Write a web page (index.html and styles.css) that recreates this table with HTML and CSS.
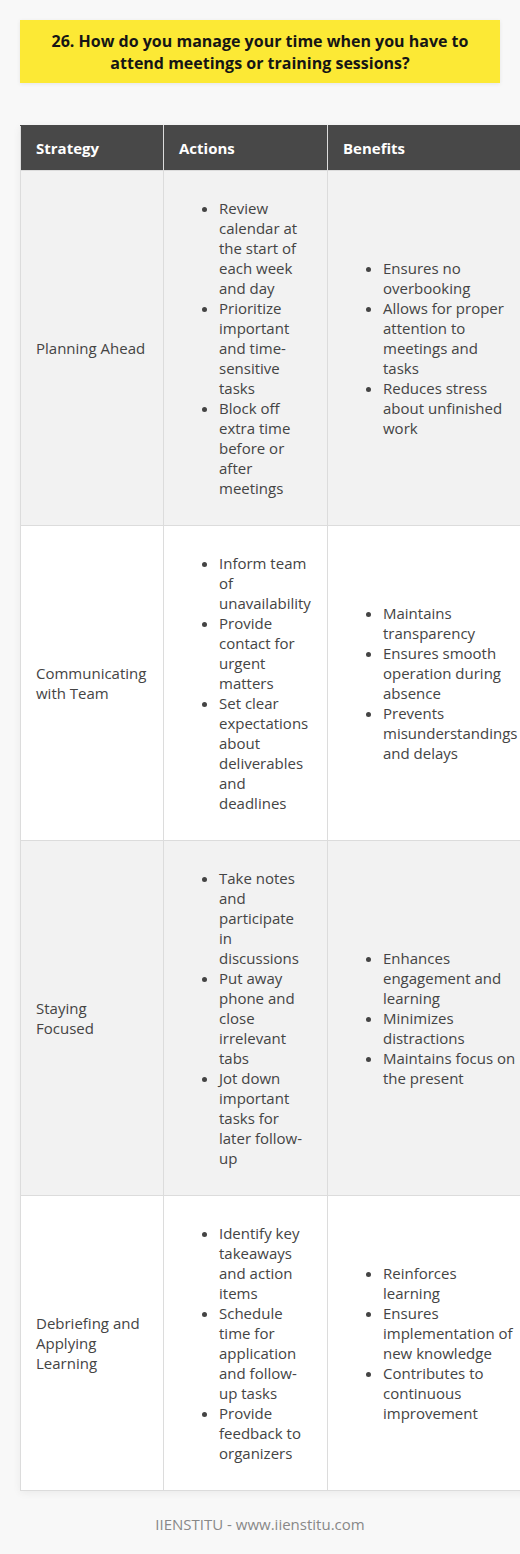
FILE: index.html
```html
<!DOCTYPE html>
<html>
<head>
<meta charset="utf-8">
<link rel="stylesheet" href="styles.css">
</head>
<body>
<div class="page">
  <h1 class="title">26. How do you manage your time when you have to attend meetings or training sessions?</h1>
  <table class="grid">
    <colgroup><col class="c1"><col class="c2"><col class="c3"></colgroup>
    <thead>
      <tr><th>Strategy</th><th>Actions</th><th>Benefits</th></tr>
    </thead>
    <tbody>
      <tr class="alt">
        <td>Planning Ahead</td>
        <td class="act"><ul><li>Review calendar at the start of each week and day</li><li>Prioritize important and time-sensitive tasks</li><li>Block off extra time before or after meetings</li></ul></td>
        <td><ul><li>Ensures no overbooking</li><li>Allows for proper attention to meetings and tasks</li><li>Reduces stress about unfinished work</li></ul></td>
      </tr>
      <tr>
        <td>Communicating with Team</td>
        <td class="act"><ul><li>Inform team of unavailability</li><li>Provide contact for urgent matters</li><li>Set clear expectations about deliverables and deadlines</li></ul></td>
        <td><ul><li>Maintains transparency</li><li>Ensures smooth operation during absence</li><li>Prevents misunderstandings and delays</li></ul></td>
      </tr>
      <tr class="alt">
        <td>Staying Focused</td>
        <td class="act"><ul><li>Take notes and participate in discussions</li><li>Put away phone and close irrelevant tabs</li><li>Jot down important tasks for later follow-up</li></ul></td>
        <td><ul><li>Enhances engagement and learning</li><li>Minimizes distractions</li><li>Maintains focus on the present</li></ul></td>
      </tr>
      <tr>
        <td>Debriefing and Applying Learning</td>
        <td class="act"><ul><li>Identify key takeaways and action items</li><li>Schedule time for application and follow-up tasks</li><li>Provide feedback to organizers</li></ul></td>
        <td><ul><li>Reinforces learning</li><li>Ensures implementation of new knowledge</li><li>Contributes to continuous improvement</li></ul></td>
      </tr>
    </tbody>
  </table>
  <p class="footer">IIENSTITU - www.iienstitu.com</p>
</div>
</body>
</html>
```

FILE: styles.css
```css
html, body {
  margin: 0;
  padding: 0;
  overflow-x: hidden;
  background: #f8f8f8;
}
body {
  font-family: "Open Sans", "Liberation Sans", sans-serif;
  color: #444;
}
.page {
  width: 520px;
  padding: 20px 0 0;
}
.title {
  margin: 0 20px;
  background: #fce935;
  color: #151515;
  font-size: 16px;
  font-weight: 700;
  line-height: 22px;
  text-align: center;
  padding: 10px 20px 9px;
  box-shadow: 0 1px 4px rgba(0,0,0,0.08);
}
.grid {
  margin: 42px 0 0 20px;
  border-collapse: collapse;
  table-layout: fixed;
  width: 511px;
  font-size: 15px;
  line-height: 20px;
  box-shadow: 0 2px 8px rgba(0,0,0,0.06);
}
.c1 { width: 143px; }
.c2 { width: 164px; }
.c3 { width: 204px; }
.grid th {
  background: #484848;
  color: #fff;
  font-weight: 700;
  text-align: left;
  padding: 12px 15px;
  border: 1px solid #dcdcdc;
  border-top-color: #484848;
}
.grid td {
  background: #fff;
  padding: 12px 15px;
  border: 1px solid #dcdcdc;
  vertical-align: middle;
  overflow: visible;
}
.grid td.act {
  padding-right: 18px;
}
.grid tr.alt td {
  background: #f2f2f2;
}
.grid ul {
  margin: 15px 0;
  padding-left: 40px;
}
.footer {
  margin: 23px 0 0;
  text-align: center;
  color: #888;
  font-size: 15px;
  line-height: 20px;
}
```
